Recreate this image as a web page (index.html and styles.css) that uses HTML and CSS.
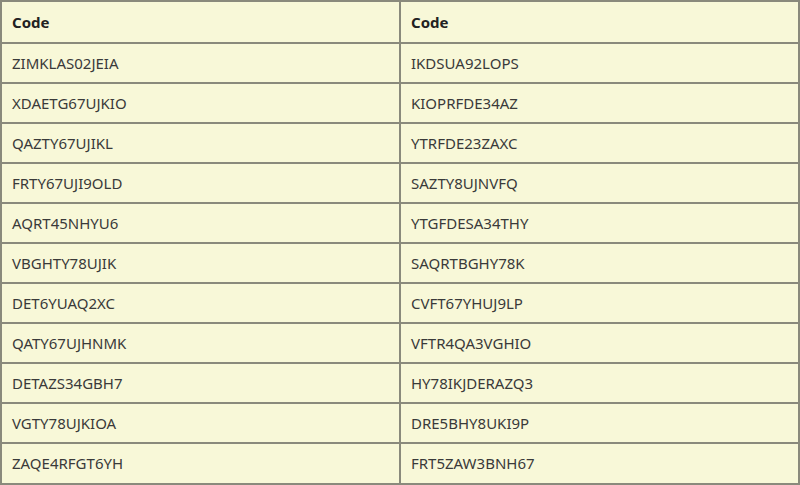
FILE: index.html
```html
<!DOCTYPE html>
<html>
<head>
<meta charset="utf-8">
<link rel="stylesheet" href="styles.css">
</head>
<body>
<table class="codes">
  <thead>
    <tr><th>Code</th><th>Code</th></tr>
  </thead>
  <tbody>
    <tr><td>ZIMKLAS02JEIA</td><td>IKDSUA92LOPS</td></tr>
    <tr><td>XDAETG67UJKIO</td><td>KIOPRFDE34AZ</td></tr>
    <tr><td>QAZTY67UJIKL</td><td>YTRFDE23ZAXC</td></tr>
    <tr><td>FRTY67UJI9OLD</td><td>SAZTY8UJNVFQ</td></tr>
    <tr><td>AQRT45NHYU6</td><td>YTGFDESA34THY</td></tr>
    <tr><td>VBGHTY78UJIK</td><td>SAQRTBGHY78K</td></tr>
    <tr><td>DET6YUAQ2XC</td><td>CVFT67YHUJ9LP</td></tr>
    <tr><td>QATY67UJHNMK</td><td>VFTR4QA3VGHIO</td></tr>
    <tr><td>DETAZS34GBH7</td><td>HY78IKJDERAZQ3</td></tr>
    <tr><td>VGTY78UJKIOA</td><td>DRE5BHY8UKI9P</td></tr>
    <tr><td>ZAQE4RFGT6YH</td><td>FRT5ZAW3BNH67</td></tr>
  </tbody>
</table>
</body>
</html>
```
FILE: styles.css
```css
html, body {
  margin: 0;
  padding: 0;
  background: #ffffff;
}
.codes {
  width: 800px;
  border-collapse: collapse;
  background: #f8f8d8;
  font-family: "Noto Sans", "Open Sans", sans-serif;
  font-size: 15px;
  color: #3a3a3a;
  table-layout: fixed;
}
.codes th,
.codes td {
  border: 2px solid #8a8a7c;
  padding: 0 10px;
  text-align: left;
  height: 38.05px;
}
.codes th {
  height: 40px;
  font-weight: bold;
  color: #222222;
}
```
